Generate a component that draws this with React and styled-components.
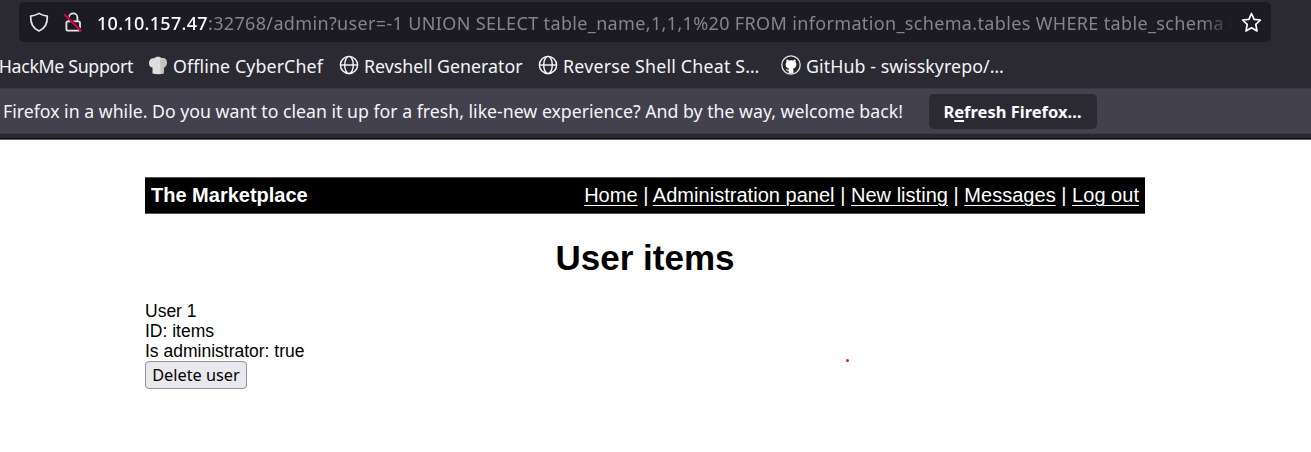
import React from 'react';
import styled, { createGlobalStyle } from 'styled-components';

const Global = createGlobalStyle`
  * { box-sizing: border-box; }
  body { margin: 0; background: #fff; font-family: "Liberation Sans", Arial, sans-serif; overflow: hidden; }
`;

const Chrome = styled.header`
  height: 140px;
  background: #2b2a33;
  color: #f4f4f8;
  font-family: "Noto Sans", "Open Sans", sans-serif;
  border-bottom: 1px solid #66656a;
  white-space: nowrap;
  overflow: hidden;
`;
const Toolbar = styled.div`
  padding: 2px 40px 0 19px;
`;
const UrlBar = styled.div`
  height: 40px;
  display: flex;
  align-items: center;
  border-radius: 5px;
  background: #1c1b22;
  padding: 0 9px 0 10px;
`;
const Shield = styled.svg`
  width: 20px;
  height: 20px;
  flex: none;
`;
const Lock = styled(Shield)`
  margin: 0 15px 0 14px;
`;
const Url = styled.div`
  flex: 1;
  overflow: hidden;
  height: 40px;
  line-height: 42px;
  font-size: 18px;
  letter-spacing: 0.35px;
  color: #86858b;
  margin-left: -1px;
  mask-image: linear-gradient(to right, #000 calc(100% - 34px), transparent);
`;
const Host = styled.span`
  color: #fbfbfe;
  font-weight: 500;
  letter-spacing: 0.3px;
`;
const Star = styled.svg`
  width: 21px;
  height: 21px;
  flex: none;
  margin-left: 6px;
`;

const Bookmarks = styled.nav`
  height: 46px;
  display: flex;
  align-items: center;
`;
const Bookmark = styled.span`
  display: flex;
  align-items: center;
  flex: none;
  width: ${(p) => p.$width}px;
  font-size: 17.8px;
  line-height: 26px;
  padding-top: 1px;
  letter-spacing: ${(p) => p.$spacing || 0}px;
`;
const ClippedBookmark = styled(Bookmark)`
  justify-content: flex-end;
  padding-right: 15px;
`;
const Favicon = styled.svg`
  width: 20px;
  height: 20px;
  flex: none;
  margin: 0 5px 1px 0;
`;

const Notice = styled.div`
  height: 46px;
  display: flex;
  align-items: center;
  background: #42414d;
  border-top: 1px solid #3a3944;
  border-bottom: 1px solid #3a3944;
  padding-left: 3px;
  font-size: 17.7px;
`;
const NoticeText = styled.span`
  width: 925.5px;
  flex: none;
  letter-spacing: 0.005px;
`;
const RefreshButton = styled.button`
  width: 168px;
  height: 35px;
  border: 0;
  border-radius: 5px;
  padding: 0;
  background: #2b2a33;
  color: #fbfbfe;
  font: 700 16.5px "Noto Sans", "Open Sans", sans-serif;
  u { text-decoration-thickness: 2px; text-underline-offset: 2px; text-decoration-skip-ink: none; }
`;
const ChromeEdge = styled.div`
  height: 5px;
  border-bottom: 1px solid #101014;
`;

const Page = styled.main`
  width: 1000px;
  margin: 37px 0 0 145px;
  color: #000;
`;
const SiteBar = styled.div`
  height: 37px;
  display: flex;
  align-items: center;
  justify-content: space-between;
  padding: 0 6px;
  background: #000;
  border-top: 1px solid #555;
  border-bottom: 1px solid #555;
  color: #fff;
  font-size: 20px;
`;
const SiteLinks = styled.span`
  letter-spacing: 0.025px;
`;
const SiteLink = styled.a`
  color: #fff;
  text-decoration: underline;
  text-decoration-thickness: 1px;
  text-underline-offset: 3px;
`;
const Title = styled.h1`
  margin: 23px 0 22px;
  font-size: 35px;
  line-height: 42px;
  text-align: center;
`;
const Details = styled.div`
  font-size: 17.5px;
  line-height: 20px;
`;
const DeleteButton = styled.button`
  display: block;
  width: 102px;
  height: 28px;
  padding: 0;
  border: 1px solid #8f8f9d;
  border-radius: 4px;
  background: #e9e9ed;
  color: #000;
  font: 16.3px/26px "Noto Sans", "Open Sans", sans-serif;
`;
const Speck = styled.i`
  position: absolute;
  left: 846px;
  top: 359px;
  width: 3px;
  height: 3px;
  border-radius: 50%;
  background: #f0142f;
`;

const Globe = () => (
  <Favicon viewBox="0 0 20 20" fill="none" stroke="#fbfbfe" strokeWidth="1.4">
    <circle cx="10" cy="10" r="8.6" />
    <ellipse cx="10" cy="10" rx="4.3" ry="8.6" />
    <path d="M1.4 10h17.2" />
  </Favicon>
);

const links = ['Home', 'Administration panel', 'New listing', 'Messages', 'Log out'];

export default function App() {
  return (
    <>
      <Global />
      <Chrome>
        <Toolbar>
          <UrlBar>
            <Shield viewBox="0 0 20 20" fill="none" stroke="#e6e6ea" strokeWidth="1.7" strokeLinejoin="round">
              <path d="M10 1.4 C7.5 3 4.8 3.8 1.7 4.2 C1.4 11.5 4.5 16.6 10 19 C15.5 16.6 18.6 11.5 18.3 4.2 C15.2 3.8 12.5 3 10 1.4Z" />
            </Shield>
            <Lock viewBox="0 0 20 20" fill="none" stroke="#e6e6ea" strokeWidth="1.8">
              <rect x="3.4" y="9.4" width="13.6" height="9.2" rx="1.6" />
              <path d="M6 9.4V5.6a4.2 4.2 0 0 1 8.4 0v3.8" />
              <path d="M3 3.4 L18 18.4" stroke="#1c1b22" strokeWidth="2.6" />
              <path d="M1.2 2.2 L18.2 19.2" stroke="#e2003f" strokeWidth="2" />
            </Lock>
            <Url>
              <Host>10.10.157.47</Host>:32768/admin?user=-1 UNION SELECT table_name,1,1,1%20 FROM information_schema.tables WHERE table_schema =
            </Url>
            <Star viewBox="0 0 21 21" fill="none" stroke="#fbfbfe" strokeWidth="1.7" strokeLinejoin="round">
              <path d="M10.5 1.5 L13.1 7.3 L19.4 8 L14.8 12.4 L16 19 L10.5 15.8 L5 19 L6.2 12.4 L1.6 8 L7.9 7.3Z" />
            </Star>
          </UrlBar>
        </Toolbar>
        <Bookmarks>
          <ClippedBookmark $width={148} $spacing={-0.35}>HackMe Support</ClippedBookmark>
          <Bookmark $width={191} $spacing={0.12}>
            <Favicon viewBox="0 0 20 20">
              <path d="M4.5 18.5 V12.5 C1.2 12 .4 8.6 1.4 6 C2.3 3.5 4.7 3 6 3.5 C7.3 1.4 12 1.2 13.5 3.2 C16.5 2.2 18.8 4.4 18.8 7 C18.9 9.8 17.8 12 16 12.5 L15.5 18.5 Q10 19.8 4.5 18.5Z" fill="#dedede" />
              <path d="M12 5 L12.5 18.8 L15.5 18.3 L16 12.5 C18 12 19 9 18.5 6.5 C17.7 4.2 15.5 3 13.5 3.4Z" fill="#c2c2c2" />
            </Favicon>
            Offline CyberChef
          </Bookmark>
          <Bookmark $width={199}><Globe />Revshell Generator</Bookmark>
          <Bookmark $width={243} $spacing={0.21}><Globe />Reverse Shell Cheat S…</Bookmark>
          <Bookmark $width={230} $spacing={0.08}>
            <Favicon viewBox="0 0 20 20">
              <circle cx="10" cy="10" r="9.2" fill="#24232b" stroke="#e4e4e6" strokeWidth="1.3" />
              <path d="M7.6 18.6 V15.8 C5.8 16 5.3 14.9 4.6 14.2 C5.9 14.2 6.2 15 7.7 14.8 C7.7 14.1 8 13.8 8.2 13.6 C5.9 13.2 4.6 11.8 4.6 9.4 C4.6 8.4 5 7.6 5.5 7 C5.2 6.1 5.3 5.2 5.6 4.6 C6.6 4.6 7.4 5.1 8 5.6 Q10 5.1 12 5.6 C12.6 5.1 13.4 4.6 14.4 4.6 C14.7 5.2 14.8 6.1 14.5 7 C15 7.6 15.4 8.4 15.4 9.4 C15.4 11.8 14.1 13.2 11.8 13.6 C12.2 14 12.4 14.5 12.4 15.2 V18.6Z" fill="#fff" />
            </Favicon>
            GitHub - swisskyrepo/…
          </Bookmark>
        </Bookmarks>
        <Notice>
          <NoticeText>Firefox in a while. Do you want to clean it up for a fresh, like-new experience? And by the way, welcome back!</NoticeText>
          <RefreshButton>R<u>e</u>fresh Firefox…</RefreshButton>
        </Notice>
        <ChromeEdge />
      </Chrome>
      <Page>
        <SiteBar>
          <strong>The Marketplace</strong>
          <SiteLinks>
            {links.map((label, i) => (
              <React.Fragment key={label}>
                {i > 0 && ' | '}
                <SiteLink>{label}</SiteLink>
              </React.Fragment>
            ))}
          </SiteLinks>
        </SiteBar>
        <Title>User items</Title>
        <Details>
          User 1<br />
          ID: items<br />
          Is administrator: true
          <DeleteButton>Delete user</DeleteButton>
        </Details>
        <Speck />
      </Page>
    </>
  );
}
